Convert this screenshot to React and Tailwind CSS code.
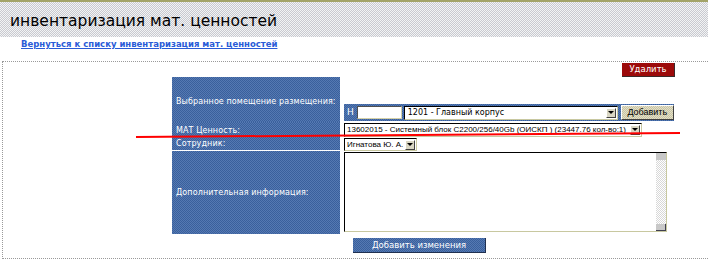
import React from "react";

function Arrow({ className = "" }) {
  return (
    <span className={"flex items-center justify-center w-[10px] h-[10px] bg-[#d9d6c3] border-r border-b border-[#404040] border-t border-l border-t-white border-l-white " + className}>
      <svg width="6" height="4" viewBox="0 0 6 4"><path d="M0 0h6L3 3z" fill="#000" /></svg>
    </span>
  );
}

function Select({ text, className = "", textClass = "" }) {
  return (
    <div className={"flex items-center justify-between bg-white border border-t-black border-l-black border-r-[#c8c8a0] border-b-[#c8c8a0] pl-[2px] pr-[1px] " + className}>
      <span className={"leading-none text-black whitespace-nowrap " + textClass}>{text}</span>
      <Arrow />
    </div>
  );
}

export default function App() {
  const blue = "bg-[repeating-conic-gradient(#3a609c_0_25%,#5579b2_0_50%)] bg-[length:2px_2px]";
  const lib = "font-['Liberation_Sans',sans-serif] text-[8px]";
  const label = "text-[8px] text-white leading-none whitespace-nowrap tracking-[0.1px]";
  return (
    <div className="relative w-[708px] h-[261px] overflow-hidden bg-white font-['DejaVu_Sans',sans-serif]">
      <div className="h-[2px] bg-[#a3a468]" />
      <div className="h-[35px] bg-[repeating-conic-gradient(#c9c9d0_0_25%,#f2f4f4_0_50%)] bg-[length:2px_2px] flex items-center pl-[10px] pt-[4px]">
        <span className="text-[15.5px] leading-none text-black">инвентаризация мат. ценностей</span>
      </div>
      <div className="pl-[21px] pt-[3px] h-[24px] leading-none text-[8.5px]">
        <span className="text-[8.5px] font-bold text-[#2a5bd7] underline leading-none">Вернуться к списку инвентаризация мат. ценностей</span>
      </div>
      <div className="ml-[2px] w-[720px] h-[198px] border border-dotted border-[#9a9a9a]">
        <div className="flex justify-end pr-[46px] pt-[1px] h-[15px]">
          <div className="w-[53px] h-[14px] bg-[#9c0a0a] border-r border-b border-[#3a2a2a] flex items-center justify-center">
            <span className="text-[8.5px] leading-none text-white">Удалить</span>
          </div>
        </div>
        <div className="ml-[169px] grid grid-cols-[168px_1fr] grid-rows-[45px_15px_14px_83px]">
          <div className={blue + " flex items-center pl-[4px] pt-[5px]"}>
            <span className={label}>Выбранное помещение размещения:</span>
          </div>
          <div className="pl-[4px] flex items-end pb-[1px]">
            <div className={"w-[330px] h-[17px] flex items-center gap-[2px] pl-[3px] " + blue}>
              <span className="text-[9px] text-white leading-none mr-[1px]">Н</span>
              <div className="w-[45px] h-[13px] bg-white border border-t-[#505050] border-l-[#505050] border-r-[#d4d0a8] border-b-[#d4d0a8]" />
              <Select text="1201 - Главный корпус" className="w-[214px] h-[14px]" textClass="text-[8px] pl-[1px]" />
              <div className="ml-[1px] w-[53px] h-[15px] bg-[repeating-conic-gradient(#c8c4a4_0_25%,#e4e0c8_0_50%)] bg-[length:2px_2px] border border-t-white border-l-white border-r-[#404040] border-b-[#404040] flex items-center justify-center">
                <span className="font-['Liberation_Sans',sans-serif] text-[9px] leading-none text-black">Добавить</span>
              </div>
            </div>
          </div>
          <div className={blue + " flex items-center pl-[4px] pt-[2px]"}>
            <span className={label}>МАТ Ценность:</span>
          </div>
          <div className="pl-[4px] flex items-center">
            <Select text="13602015 - Системный блок C2200/256/40Gb (ОИСКП ) (23447.76 кол-во:1)" className="w-[298px] h-[14px]" textClass={lib} />
          </div>
          <div className={blue + " flex items-center pl-[4px] border-b border-white"}>
            <span className={label}>Сотрудник:</span>
          </div>
          <div className="pl-[4px] flex items-start pt-[1px]">
            <Select text="Игнатова Ю. А." className="w-[73px] h-[13px]" textClass={lib} />
          </div>
          <div className={blue + " flex items-center pl-[4px]"}>
            <span className={label}>Дополнительная информация:</span>
          </div>
          <div className="pl-[4px] pt-[1px]">
            <div className="w-[323px] h-[80px] bg-white border border-t-black border-l-black border-r-[#c8c8a0] border-b-[#c8c8a0] flex justify-end">
              <div className="w-[10px] h-full flex flex-col justify-between bg-[repeating-conic-gradient(#d8d8d8_0_25%,#ffffff_0_50%)] bg-[length:2px_2px]">
                <div className="h-[7px] bg-[#c8c8c8]" />
                <div className="h-[7px] bg-[#c8c8c8] border-r border-b border-[#404050]" />
              </div>
            </div>
          </div>
        </div>
        <div className="ml-[350px] mt-[4px] w-[133px] h-[15px] border-r border-b border-[#203050] flex items-center justify-center bg-[repeating-conic-gradient(#3a609c_0_25%,#5579b2_0_50%)] bg-[length:2px_2px]">
          <span className="text-[8.5px] leading-none text-white">Добавить изменения</span>
        </div>
      </div>
      <svg className="absolute left-0 top-0 pointer-events-none" width="708" height="261">
        <line x1="136" y1="137" x2="680" y2="133" stroke="#ff0000" strokeWidth="2" />
      </svg>
    </div>
  );
}
